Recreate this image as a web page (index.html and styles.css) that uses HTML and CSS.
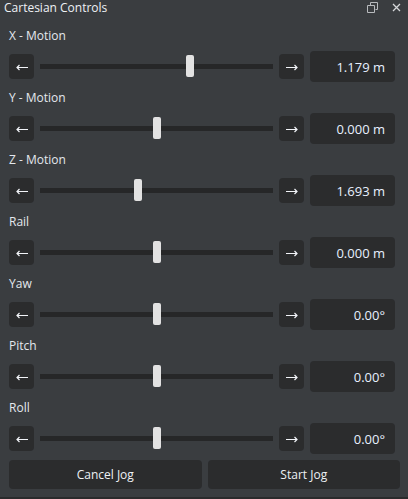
FILE: index.html
```html
<!DOCTYPE html>
<html>
<head>
<meta charset="utf-8">
<link rel="stylesheet" href="styles.css">
</head>
<body>
<div class="panel">
  <div class="titlebar">
    <span class="title">Cartesian Controls</span>
    <div class="title-icons">
      <svg class="icon-float" width="11" height="11" viewBox="0 0 11 11"><path d="M3.5 0.5h7v7h-2M0.5 3.5h7v7h-7z M3.5 0.5v3" fill="none" stroke="#b8bbbe" stroke-width="1"/></svg>
      <svg class="icon-close" width="9" height="9" viewBox="0 0 9 9"><path d="M1 1L8 8M8 1L1 8" stroke="#d6d8da" stroke-width="1.3"/></svg>
    </div>
  </div>
  <div class="content">
    <div class="control">
      <div class="label">X - Motion</div>
      <div class="row">
        <div class="step"><svg width="12" height="7" viewBox="0 0 12 7"><path d="M1 3.5H12M3.5 1L1 3.5L3.5 6" fill="none" stroke="#f2f4f8" stroke-width="1.2"/></svg></div>
        <div class="slider"><div class="track"></div><div class="handle" style="left:64.4%"></div></div>
        <div class="step"><svg width="12" height="7" viewBox="0 0 12 7"><path d="M0 3.5H11M8.5 1L11 3.5L8.5 6" fill="none" stroke="#f2f4f8" stroke-width="1.2"/></svg></div>
        <div class="value">1.179 m</div>
      </div>
    </div>
    <div class="control">
      <div class="label">Y - Motion</div>
      <div class="row">
        <div class="step"><svg width="12" height="7" viewBox="0 0 12 7"><path d="M1 3.5H12M3.5 1L1 3.5L3.5 6" fill="none" stroke="#f2f4f8" stroke-width="1.2"/></svg></div>
        <div class="slider"><div class="track"></div><div class="handle" style="left:50%"></div></div>
        <div class="step"><svg width="12" height="7" viewBox="0 0 12 7"><path d="M0 3.5H11M8.5 1L11 3.5L8.5 6" fill="none" stroke="#f2f4f8" stroke-width="1.2"/></svg></div>
        <div class="value">0.000 m</div>
      </div>
    </div>
    <div class="control">
      <div class="label">Z - Motion</div>
      <div class="row">
        <div class="step"><svg width="12" height="7" viewBox="0 0 12 7"><path d="M1 3.5H12M3.5 1L1 3.5L3.5 6" fill="none" stroke="#f2f4f8" stroke-width="1.2"/></svg></div>
        <div class="slider"><div class="track"></div><div class="handle" style="left:42%"></div></div>
        <div class="step"><svg width="12" height="7" viewBox="0 0 12 7"><path d="M0 3.5H11M8.5 1L11 3.5L8.5 6" fill="none" stroke="#f2f4f8" stroke-width="1.2"/></svg></div>
        <div class="value">1.693 m</div>
      </div>
    </div>
    <div class="control">
      <div class="label">Rail</div>
      <div class="row">
        <div class="step"><svg width="12" height="7" viewBox="0 0 12 7"><path d="M1 3.5H12M3.5 1L1 3.5L3.5 6" fill="none" stroke="#f2f4f8" stroke-width="1.2"/></svg></div>
        <div class="slider"><div class="track"></div><div class="handle" style="left:50%"></div></div>
        <div class="step"><svg width="12" height="7" viewBox="0 0 12 7"><path d="M0 3.5H11M8.5 1L11 3.5L8.5 6" fill="none" stroke="#f2f4f8" stroke-width="1.2"/></svg></div>
        <div class="value">0.000 m</div>
      </div>
    </div>
    <div class="control">
      <div class="label">Yaw</div>
      <div class="row">
        <div class="step"><svg width="12" height="7" viewBox="0 0 12 7"><path d="M1 3.5H12M3.5 1L1 3.5L3.5 6" fill="none" stroke="#f2f4f8" stroke-width="1.2"/></svg></div>
        <div class="slider"><div class="track"></div><div class="handle" style="left:50%"></div></div>
        <div class="step"><svg width="12" height="7" viewBox="0 0 12 7"><path d="M0 3.5H11M8.5 1L11 3.5L8.5 6" fill="none" stroke="#f2f4f8" stroke-width="1.2"/></svg></div>
        <div class="value">0.00°</div>
      </div>
    </div>
    <div class="control">
      <div class="label">Pitch</div>
      <div class="row">
        <div class="step"><svg width="12" height="7" viewBox="0 0 12 7"><path d="M1 3.5H12M3.5 1L1 3.5L3.5 6" fill="none" stroke="#f2f4f8" stroke-width="1.2"/></svg></div>
        <div class="slider"><div class="track"></div><div class="handle" style="left:50%"></div></div>
        <div class="step"><svg width="12" height="7" viewBox="0 0 12 7"><path d="M0 3.5H11M8.5 1L11 3.5L8.5 6" fill="none" stroke="#f2f4f8" stroke-width="1.2"/></svg></div>
        <div class="value">0.00°</div>
      </div>
    </div>
    <div class="control">
      <div class="label">Roll</div>
      <div class="row">
        <div class="step"><svg width="12" height="7" viewBox="0 0 12 7"><path d="M1 3.5H12M3.5 1L1 3.5L3.5 6" fill="none" stroke="#f2f4f8" stroke-width="1.2"/></svg></div>
        <div class="slider"><div class="track"></div><div class="handle" style="left:50%"></div></div>
        <div class="step"><svg width="12" height="7" viewBox="0 0 12 7"><path d="M0 3.5H11M8.5 1L11 3.5L8.5 6" fill="none" stroke="#f2f4f8" stroke-width="1.2"/></svg></div>
        <div class="value">0.00°</div>
      </div>
    </div>
    <div class="actions">
      <button class="btn">Cancel Jog</button>
      <button class="btn">Start Jog</button>
    </div>
  </div>
  <div class="bottom-line"></div>
</div>
</body>
</html>
```
FILE: styles.css
```css
html, body {
  margin: 0;
  padding: 0;
  background: #3a3d40;
}
body {
  width: 408px;
  height: 499px;
  overflow: hidden;
  font-family: "Open Sans", "Noto Sans", sans-serif;
  font-size: 12px;
  color: #e4e8ee;
}
.panel {
  display: flex;
  flex-direction: column;
  height: 499px;
}
.titlebar {
  height: 16px;
  display: flex;
  align-items: flex-start;
  justify-content: space-between;
  padding: 0 7px 0 4px;
}
.title {
  line-height: 16px;
  color: #eef1f5;
}
.title-icons {
  display: flex;
  align-items: center;
  gap: 14px;
  padding-top: 2px;
}
.content {
  padding: 12px 8px 0 9px;
  flex: 1;
}
.control {
  margin-bottom: 8px;
  margin-right: 5px;
}
.label {
  line-height: 16px;
  height: 16px;
  margin-bottom: 7px;
}
.row {
  display: flex;
  align-items: center;
  gap: 6px;
  height: 31px;
}
.step {
  width: 25px;
  height: 25px;
  background: #2b2c2d;
  border-radius: 4px;
  display: flex;
  align-items: center;
  justify-content: center;
  flex: none;
}
.step svg {
  display: block;
  margin-top: 1px;
}
.slider {
  flex: 1;
  position: relative;
  height: 31px;
}
.track {
  position: absolute;
  left: 0;
  right: 0;
  top: 13px;
  height: 5px;
  background: #262728;
}
.handle {
  position: absolute;
  top: 4px;
  width: 8px;
  height: 22px;
  margin-left: -4px;
  background: #e2e2e2;
  border-radius: 2px;
}
.value {
  width: 85px;
  height: 31px;
  background: #2b2c2d;
  border-radius: 4px;
  box-sizing: border-box;
  padding-right: 10px;
  display: flex;
  align-items: center;
  justify-content: flex-end;
  font-size: 13px;
  color: #e8f0ff;
  flex: none;
}
.actions {
  display: flex;
  gap: 6px;
  margin-top: -2px;
}
.btn {
  flex: 1;
  height: 29px;
  border: none;
  border-radius: 4px;
  background: #2b2c2d;
  color: #eef1f5;
  font-family: inherit;
  font-size: 12px;
  padding: 0;
}
.bottom-line {
  height: 2px;
  background: #2a2b2c;
}
```
